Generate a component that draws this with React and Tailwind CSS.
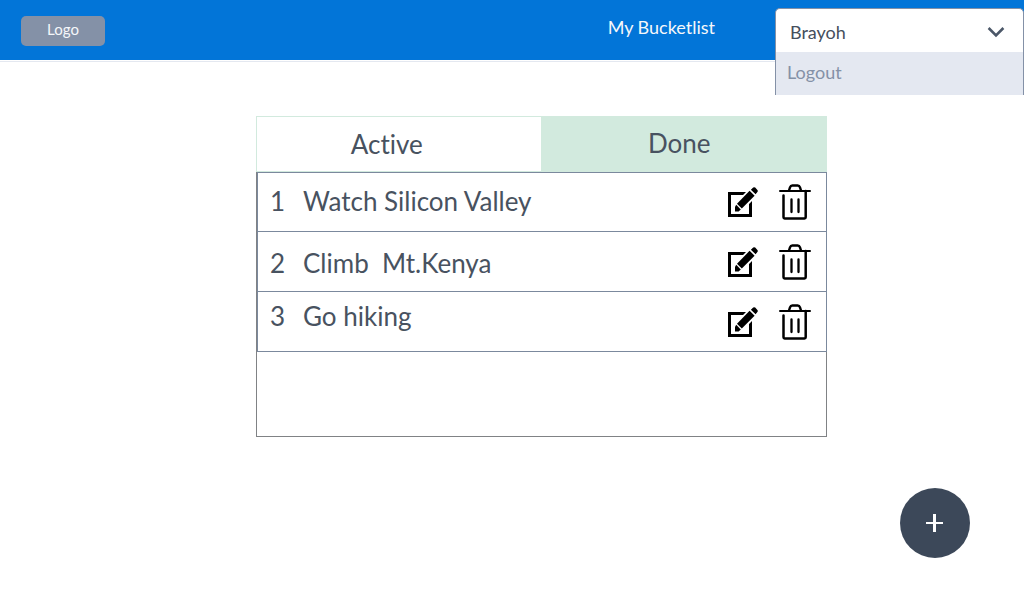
import { useState } from "react";

const initialItems = [
  { id: 1, title: "Watch Silicon Valley", rowHeight: "h-[59px]", textCell: "pb-0.5" },
  { id: 2, title: "Climb  Mt.Kenya", rowHeight: "h-[60px]", textCell: "pt-0.5" },
  { id: 3, title: "Go hiking", rowHeight: "h-[60px]", textCell: "pb-3" },
];

function ChevronDown() {
  return (
    <svg width="18" height="12" viewBox="0 0 18 12" fill="none" aria-hidden="true">
      <path d="M1.6 2 L9 9.4 L16.4 2" stroke="#4b5768" strokeWidth="2.6" />
    </svg>
  );
}

function EditIcon() {
  return (
    <svg width="30" height="30" viewBox="0 0 30 30" aria-hidden="true">
      <path d="M18 5H0V30H24V14L21 17V27H3V8H15Z" fill="#000" />
      <path d="M7 20L8.2 17.7L12.8 22.5L10.6 24.6H7Z" fill="#000" />
      <path d="M9 16.8L21.6 3.8L26.6 8.8L13.8 21.6Z" fill="#000" />
      <path d="M22.9 2.7L25.2 0.6Q26.2 -0.2 27.2 0.6L29.4 2.9Q30.2 3.9 29.4 4.9L27.6 7.3Z" fill="#000" />
    </svg>
  );
}

function TrashIcon() {
  return (
    <svg width="32" height="36" viewBox="0 0 32 36" fill="none" stroke="#000" aria-hidden="true">
      <path d="M1 7H31" strokeWidth="2" strokeLinecap="round" />
      <path d="M10 6.5L11 3.4Q11.6 1.5 13.4 1.5H18.6Q20.4 1.5 21 3.4L22 6.5" strokeWidth="2.4" />
      <path d="M4.5 11.5V33.3Q4.5 34.5 5.7 34.5H25.5Q26.7 34.5 26.7 33.3V7" strokeWidth="2.5" strokeLinecap="round" />
      <path d="M12.5 15.5V28M19.5 15.5V28" strokeWidth="2.3" strokeLinecap="round" />
    </svg>
  );
}

function Header() {
  const [open, setOpen] = useState(true);
  return (
    <header className="border-b border-[#e4e8f0] pb-px">
      <div className="flex h-[60px] items-start bg-[#0275d8]">
        <a
          href="#home"
          className="mt-4 ml-[21px] flex h-[30px] w-[84px] items-center justify-center rounded-[5px] bg-[#8491a7] pb-1 text-[15px] text-[#f5f7fa]"
        >
          Logo
        </a>
        <a href="#bucketlist" className="mt-[15px] mr-[60px] ml-auto text-lg leading-6 text-[#f5f7fa]">
          My Bucketlist
        </a>
        <div className="relative mt-2 w-[249px]">
          <button
            type="button"
            aria-haspopup="menu"
            aria-expanded={open}
            onClick={() => setOpen(!open)}
            className="flex h-11 w-full items-center justify-between rounded-t-[5px] border border-b-0 border-[#8491a7] bg-white pt-0.5 pr-[18px] pl-3.5 text-lg text-[#454f5d]"
          >
            Brayoh
            <ChevronDown />
          </button>
          {open && (
            <div
              role="menu"
              className="absolute top-full left-0 w-full border-x border-[#8491a7] bg-[#e4e8f1]"
            >
              <button
                type="button"
                role="menuitem"
                className="flex h-[43px] w-full items-center pb-1 pl-[11px] text-lg text-[#8491a7]"
              >
                Logout
              </button>
            </div>
          )}
        </div>
      </div>
    </header>
  );
}

export default function App() {
  const [tab, setTab] = useState("active");
  return (
    <div className="min-h-screen bg-white font-['Lato',sans-serif] text-[#485260] [font-variant-ligatures:none]">
      <Header />
      <main className="grid grid-cols-[256fr_571fr_197fr] pt-[54px]">
        <section className="col-start-2">
          <div role="tablist" className="grid h-14 grid-cols-2 text-[26px]">
            <button
              type="button"
              role="tab"
              aria-selected={tab === "active"}
              onClick={() => setTab("active")}
              className="border border-[#d2eade] bg-white pr-6"
            >
              Active
            </button>
            <button
              type="button"
              role="tab"
              aria-selected={tab === "done"}
              onClick={() => setTab("done")}
              className="bg-[#d2eade] pr-2.5 pb-0.5"
            >
              Done
            </button>
          </div>
          <div className="border-b border-l border-[#808285]">
            <table className="w-full border-separate border-spacing-0 border-x border-t border-[#7b899d] text-[26px] leading-8">
              <tbody>
                {initialItems.map((item) => (
                  <tr key={item.id} className={item.rowHeight}>
                    <td className={`w-[45px] border-b border-[#7b899d] pl-3 ${item.textCell}`}>
                      {item.id}
                    </td>
                    <td className={`border-b border-[#7b899d] whitespace-pre ${item.textCell}`}>
                      {item.title}
                    </td>
                    <td className="border-b border-[#7b899d] pr-[15px]">
                      <div className="flex items-center justify-end gap-[21px]">
                        <button type="button" aria-label={`Edit ${item.title}`}>
                          <EditIcon />
                        </button>
                        <button type="button" aria-label={`Delete ${item.title}`}>
                          <TrashIcon />
                        </button>
                      </div>
                    </td>
                  </tr>
                ))}
              </tbody>
            </table>
            <div className="h-[84px] border-r border-[#808285]" />
          </div>
        </section>
      </main>
      <button
        type="button"
        aria-label="Add item"
        className="fixed right-[54px] bottom-[42px] flex size-[70px] items-center justify-center rounded-full bg-[#3c4859]"
      >
        <svg width="18" height="18" viewBox="0 0 18 18" fill="#fff" aria-hidden="true">
          <path d="M7 0H10V18H7Z M0 8H17V10H0Z" />
        </svg>
      </button>
    </div>
  );
}
